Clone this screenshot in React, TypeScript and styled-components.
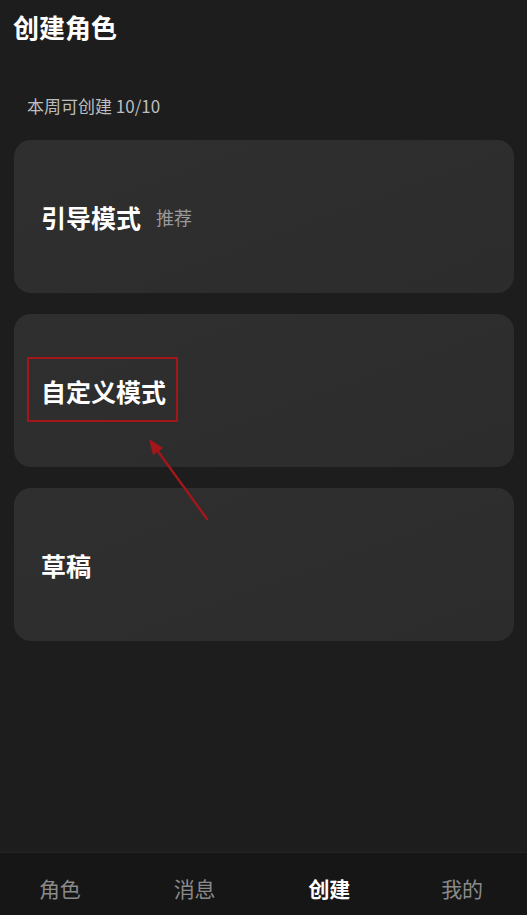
import styled, { createGlobalStyle } from "styled-components";

const GlobalStyle = createGlobalStyle`
  html, body {
    margin: 0;
    padding: 0;
    background-color: #1d1d1d;
    font-family: "Noto Sans CJK SC", "Noto Sans", sans-serif;
  }
`;

const Page = styled.div`
  position: relative;
  display: flex;
  flex-direction: column;
  height: 915px;
  overflow: hidden;
  background-color: #1d1d1d;
`;

const Title = styled.h1`
  margin: 0;
  padding: 8px 13px 0;
  font-size: 26px;
  line-height: 38px;
  font-weight: 700;
  color: #ffffff;
`;

const Quota = styled.div`
  padding: 48px 27px 0;
  font-size: 17px;
  line-height: 24px;
  color: #bdbdbd;
`;

const CardList = styled.div`
  display: flex;
  flex-direction: column;
  gap: 21px;
  padding: 22px 13px 0 14px;
`;

const Card = styled.div`
  display: flex;
  align-items: center;
  height: 153px;
  padding: 0 27px;
  box-sizing: border-box;
  border-radius: 17px;
  background: linear-gradient(160deg, #2f2f2f, #2c2c2c);
`;

const CardTitle = styled.span<{ $marked?: boolean }>`
  position: relative;
  font-size: 25px;
  line-height: 34px;
  font-weight: 700;
  color: #ffffff;

  ${(p) =>
    p.$marked &&
    `
    &::after {
      content: "";
      position: absolute;
      left: -14px;
      right: -12px;
      top: -17px;
      bottom: -14px;
      border: 2px solid #a3161a;
    }
  `}
`;

const Tag = styled.span`
  margin-left: 15px;
  margin-top: 1px;
  font-size: 18px;
  color: #9a9a9a;
`;

const NavBar = styled.nav`
  margin-top: auto;
  display: grid;
  grid-template-columns: repeat(4, 1fr);
  height: 63px;
  background-color: #161616;
  border-top: 1px solid #242424;
  box-sizing: border-box;
`;

const NavItem = styled.div<{ $active?: boolean }>`
  display: flex;
  justify-content: center;
  padding-top: 21px;
  font-size: 21px;
  line-height: 28px;
  font-weight: ${(p) => (p.$active ? 700 : 400)};
  color: ${(p) => (p.$active ? "#ffffff" : "#8a8a8a")};
`;

const Arrow = styled.svg`
  position: absolute;
  left: 140px;
  top: 430px;
  width: 80px;
  height: 100px;
  pointer-events: none;
`;

const tabs = [
  { label: "角色", shift: -6 },
  { label: "消息", shift: -3 },
  { label: "创建", shift: 0, active: true },
  { label: "我的", shift: 1 },
];

export default function App() {
  return (
    <>
      <GlobalStyle />
      <Page>
        <Title>创建角色</Title>
        <Quota>本周可创建 10/10</Quota>
        <CardList>
          <Card>
            <CardTitle>引导模式</CardTitle>
            <Tag>推荐</Tag>
          </Card>
          <Card>
            <CardTitle $marked>自定义模式</CardTitle>
          </Card>
          <Card>
            <CardTitle>草稿</CardTitle>
          </Card>
        </CardList>
        <NavBar>
          {tabs.map((t) => (
            <NavItem key={t.label} $active={t.active} style={{ transform: `translateX(${t.shift}px)` }}>
              {t.label}
            </NavItem>
          ))}
        </NavBar>
        <Arrow viewBox="140 430 80 100">
          <line x1="207" y1="519" x2="157" y2="450" stroke="#a3161a" strokeWidth="2.4" strokeLinecap="round" />
          <polygon points="149,439 163,448 153,455" fill="#a3161a" />
        </Arrow>
      </Page>
    </>
  );
}
